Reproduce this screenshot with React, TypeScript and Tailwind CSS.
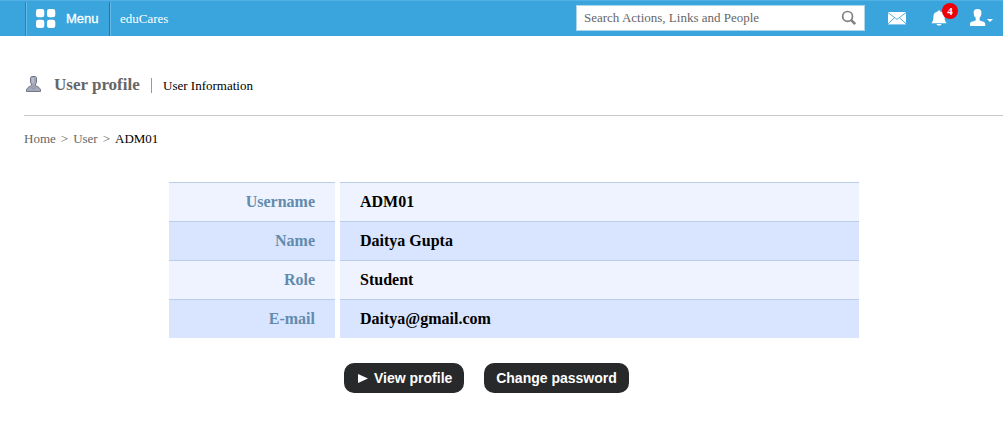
const rows = [
  ['Username', 'ADM01'],
  ['Name', 'Daitya Gupta'],
  ['Role', 'Student'],
  ['E-mail', 'Daitya@gmail.com'],
];

function MenuIcon() {
  return (
    <svg className="block h-5 w-5" viewBox="0 0 20 20" fill="white">
      <rect x="0" y="0" width="8.3" height="8.3" rx="2.4" />
      <rect x="11" y="0" width="8.3" height="8.3" rx="2.4" />
      <rect x="0" y="10.8" width="8.3" height="8.3" rx="2.4" />
      <rect x="11" y="10.8" width="8.3" height="8.3" rx="2.4" />
    </svg>
  );
}

function SearchIcon() {
  return (
    <svg className="block h-4 w-4" viewBox="0 0 16 16" fill="none" stroke="#808080">
      <circle cx="6.6" cy="6.4" r="4.9" strokeWidth="1.7" />
      <path d="M10 9.9l4.2 4.2" strokeWidth="2.6" />
    </svg>
  );
}

function MailIcon() {
  return (
    <svg className="block h-[13px] w-[18px]" viewBox="0 0 18 13">
      <rect width="18" height="12.4" fill="#fff" />
      <path d="M0 0.6L9 7.4L18 0.6M0 11.8L6.5 5.8M18 11.8L11.5 5.8" fill="none" stroke="#3aa4dc" strokeWidth="0.9" />
    </svg>
  );
}

function BellIcon() {
  return (
    <svg className="block h-4 w-4" viewBox="0 0 16 16" fill="#fff">
      <path d="M8 0.5C9 0.5 9.3 1 9.3 1.5C12.2 2 13.6 4 13.6 6.5C13.6 9.8 14 11 15.6 13.2H0.4C2 11 2.4 9.8 2.4 6.5C2.4 4 3.8 2 6.7 1.5C6.7 1 7 0.5 8 0.5Z" />
      <path d="M5.5 14.1H10.5C10.1 15.2 9.1 15.8 8 15.8S5.9 15.2 5.5 14.1Z" />
    </svg>
  );
}

function PersonIcon() {
  return (
    <svg className="block h-[17px] w-4" viewBox="0 0 16 17" fill="#fff">
      <path d="M7.5 0C10.3 0 11.6 1.5 11.4 4C11.3 6.5 10.6 7.9 9.6 8.8V11.3C10.5 12.3 15.2 12.4 15.2 14.8V17H0V14.8C0 12.4 4.8 12.3 5.7 11.3V8.8C4.5 7.9 3.8 6.5 3.7 4C3.5 1.5 4.7 0 7.5 0Z" />
    </svg>
  );
}

function ProfileIcon() {
  return (
    <svg className="block h-4 w-[15px]" viewBox="0 0 15 16">
      <path
        d="M5.5 0.5H9.5L10.5 1.5V6.5L9.5 8V9.5L13 11.5L14.5 13.5V15.5H0.5V13.5L2 11.5L5.5 9.5V8L4.5 6.5V1.5Z"
        fill="#a5a9b7"
        stroke="#73778a"
      />
      <path d="M7.5 9.8L5.5 11.5L7.5 13.5L9.5 11.5Z" fill="none" stroke="#8b8fa0" strokeWidth="0.8" />
      <path d="M6.8 2V7" stroke="#bbbec8" strokeWidth="2" />
    </svg>
  );
}

export default function App() {
  return (
    <div className="h-[436px] w-[1003px] overflow-hidden bg-white font-['Liberation_Serif',serif] text-black">
      <header className="flex h-9 border-t border-[#51b1e4] bg-[#3aa4dc] pt-px">
        <div className="ml-[25px] flex w-[85px] border-x border-[#2478a6] border-l-[#2b83b3] pt-[7px] pl-[10px] shadow-[1px_0_0_#65bae7,inset_1px_0_0_#65bae7]">
          <MenuIcon />
          <span className="ml-[10px] font-['Liberation_Sans',sans-serif] text-[13px] leading-5 text-white [-webkit-text-stroke:0.3px_white]">Menu</span>
        </div>
        <span className="ml-[10px] pt-[8px] text-[13px] leading-[18px] text-white">eduCares</span>
        <div className="mt-[3px] ml-auto flex h-[26px] w-[289px] items-center border border-[#aed5ea] bg-white pr-[7px] pl-[7px]">
          <span className="flex-1 text-[13px] leading-4 text-[#666]">Search Actions, Links and People</span>
          <SearchIcon />
        </div>
        <div className="mt-[10px] ml-[23px]"><MailIcon /></div>
        <div className="relative mt-[8px] ml-[25px]">
          <BellIcon />
          <span className="absolute -top-[7px] left-[11px] flex h-4 w-4 items-center justify-center rounded-full bg-[#ed0008] text-[11px] leading-none font-bold text-white">4</span>
        </div>
        <div className="mt-[7px] ml-[23px]"><PersonIcon /></div>
        <svg className="mt-[17px] mr-[10px] ml-[1px] block h-[3px] w-[6px]" viewBox="0 0 6 3"><path d="M0 0H6L3 3Z" fill="white" /></svg>
      </header>

      <main className="pl-6">
        <div className="flex h-20 border-b border-[#c8c8c8]">
          <div className="mt-10 ml-[2px]"><ProfileIcon /></div>
          <h1 className="mt-[39px] ml-[13px] w-[86px] text-[17px] leading-5 font-bold whitespace-nowrap text-[#666]">User profile</h1>
          <span className="mt-[42px] ml-[11px] h-[15px] w-px bg-[#999]" />
          <span className="mt-[41px] ml-[11px] text-[13px] leading-[18px]">User Information</span>
        </div>
        <nav className="flex gap-[5px] pt-[14px] text-[13px] leading-[18px] text-[#666]">
          <span>Home</span><span>&gt;</span><span>User</span><span>&gt;</span><span className="text-black">ADM01</span>
        </nav>

        <div className="mt-[34px] ml-[145px] w-[690px] text-[16px] leading-[38px] font-bold">
          {rows.map(([label, value], i) => (
            <div key={label} className="flex gap-[5px]">
              <div className={`h-[39px] w-[166px] border-t border-[#b9cfe9] pr-5 text-right text-[#628bad] ${i % 2 ? 'bg-[#d9e5ff]' : 'bg-[#eef3ff]'}`}>{label}</div>
              <div className={`h-[39px] flex-1 border-t border-[#b9cfe9] pl-5 ${i % 2 ? 'bg-[#d9e5ff]' : 'bg-[#eef3ff]'}`}>{value}</div>
            </div>
          ))}
        </div>

        <div className="mt-[25px] ml-[320px] flex gap-5 font-['Liberation_Sans',sans-serif] text-[14px] font-bold text-white">
          <button className="flex h-[30px] w-[120px] items-center rounded-[10px] bg-[#28292b] pl-[14px] whitespace-nowrap">
            <svg className="mr-[6px] block h-[9px] w-[10px] shrink-0" viewBox="0 0 10 9"><path d="M0 0L10 4.5L0 9Z" fill="white" /></svg>
            View profile
          </button>
          <button className="h-[30px] w-[145px] rounded-[10px] bg-[#28292b] whitespace-nowrap">Change password</button>
        </div>
      </main>
    </div>
  );
}
